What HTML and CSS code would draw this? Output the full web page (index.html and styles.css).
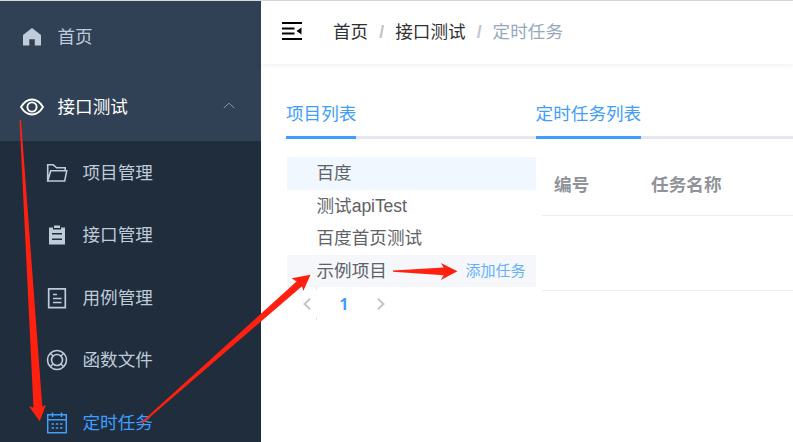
FILE: index.html
```html
<!DOCTYPE html>
<html lang="zh-CN">
<head>
<meta charset="utf-8">
<title>定时任务</title>
<link rel="stylesheet" href="styles.css">
</head>
<body>
<div class="app">
  <aside class="sidebar">
    <div class="item top-item">
      <svg class="icon" viewBox="0 0 24 24"><path fill="currentColor" d="M12 3 21 10v10.500h-6.200v-6.300H9.300v6.300H3V10z"/></svg>
      <span>首页</span>
    </div>
    <div class="item top-item open">
      <svg class="icon" viewBox="0 0 24 24"><g fill="none" stroke="currentColor" stroke-width="1.900"><path d="M1 12Q5.500 4.500 12 4.500T23 12Q18.500 19.500 12 19.500T1 12Z"/><circle cx="12" cy="12" r="4.600"/></g></svg>
      <span>接口测试</span>
      <svg class="chevron" viewBox="0 0 12 7"><path d="M.8 6 6 1.200 11.200 6"/></svg>
    </div>
    <nav class="submenu">
      <div class="item">
        <svg class="icon" viewBox="0 0 24 24"><path fill="none" stroke="currentColor" stroke-width="1.600" d="M2.700 20V3.800H8.200L11.700 6.800H20.200V9.500M2.700 20 5.700 9.800H21.700L19.700 20Z"/></svg>
        <span>项目管理</span>
      </div>
      <div class="item">
        <svg class="icon" viewBox="0 0 24 24"><path fill="currentColor" fill-rule="evenodd" d="M4 4.500H8V6.500H16V4.500H20V21.500H4ZM7 10V11.500H17V10ZM7 15.500V17H17V15.500ZM9 2.500H15V5H9Z"/></svg>
        <span>接口管理</span>
      </div>
      <div class="item">
        <svg class="icon" viewBox="0 0 24 24"><path fill="none" stroke="currentColor" stroke-width="1.700" d="M3.700 2.800H20.300V21.700H3.700ZM8 8.500H12M8 12.500H16.500M8 16.500H16.500"/></svg>
        <span>用例管理</span>
      </div>
      <div class="item">
        <svg class="icon" viewBox="0 0 24 24"><g fill="none" stroke="currentColor" stroke-width="1.600"><circle cx="12" cy="12" r="9.500"/><circle cx="12" cy="12" r="5.500"/><path d="M5.300 5.300 8 8M18.700 5.300 16 8M5.300 18.700 8 16M18.700 18.700 16 16"/></g></svg>
        <span>函数文件</span>
      </div>
      <div class="item current">
        <svg class="icon" viewBox="0 0 24 24"><path fill="none" stroke="currentColor" stroke-width="1.500" d="M2.700 3.700H21.300V21.700H2.700ZM2.700 8.700H21.300M7.500 1.500V6M16.500 1.500V6M6.500 13H9M10.800 13H13.300M15 13H17.500M6.500 17H9M10.800 17H13.300M15 17H17.500"/></svg>
        <span>定时任务</span>
      </div>
    </nav>
  </aside>
  <main class="main">
    <header class="header">
      <svg class="toggle" viewBox="0 0 20 18"><path stroke="currentColor" stroke-width="2" d="M0 1H20M0 6.500H12.500M0 11.500H12.500M0 17H20"/><path fill="currentColor" d="M19.500 5.500V12.500L14.500 9Z"/></svg>
      <div class="crumbs"><span>首页</span><i>/</i><span>接口测试</span><i>/</i><span class="last">定时任务</span></div>
    </header>
    <div class="content">
      <section class="projects">
        <div class="tabs"><span class="tab">项目列表</span></div>
        <div class="list">
          <div class="row selected">百度</div>
          <div class="row">测试<span class="latin">apiTest</span></div>
          <div class="row">百度首页测试</div>
          <div class="row hover"><span>示例项目</span><a class="add">添加任务</a></div>
        </div>
        <div class="pager">
          <svg viewBox="0 0 8 12"><path d="M7 .8 1.500 6 7 11.200"/></svg>
          <b>1</b>
          <svg viewBox="0 0 8 12"><path d="M1 .8 6.500 6 1 11.200"/></svg>
        </div>
      </section>
      <section class="tasks">
        <div class="tabs"><span class="tab">定时任务列表</span></div>
        <div class="table">
          <div class="thead"><span>编号</span><span>任务名称</span></div>
          <div class="tbody"></div>
        </div>
      </section>
    </div>
  </main>
</div>
<svg class="arrows" viewBox="0 0 793 442">
  <path d="M19.500 120H21L42.300 406.700 46 404.700 39.700 421.300 28.800 406 33.500 407.700Z"/>
  <path d="M141 422.500 296.500 281.500 291.700 278.300 310.500 274.700 303.300 291 302 286.300 142.500 423.500Z"/>
  <path d="M393 270.400 443.700 267.500 440.800 263 457.500 271.300 440.800 280 443.700 275.200 393 271.700Z"/>
</svg>
</body>
</html>
```
FILE: styles.css
```css
* { box-sizing: border-box; }
body {
  margin: 0;
  overflow: hidden;
  background: #fff;
  font: 400 17.6px/24px "Liberation Sans", "Noto Sans CJK SC", sans-serif;
}
.app {
  display: flex;
  height: 442px;
  border-top: 1px solid #d7d9db;
}
.sidebar {
  width: 261px;
  flex: none;
  overflow: hidden;
  background: #304156;
  color: #bfcbd9;
}
.item {
  display: flex;
  align-items: center;
  height: 62.5px;
  padding: 1px 0 0 45px;
}
.top-item { height: 70px; padding: 2px 26px 0 20px; }
.icon { width: 24px; height: 24px; margin-right: 13.5px; flex: none; }
.open { color: #fff; }
.chevron {
  width: 12px;
  height: 7px;
  margin: -4px 0 0 auto;
  fill: none;
  stroke: #8a939f;
}
.submenu { height: 320px; background: #1f2d3d; }
.current { color: #409eff; }
.main { flex: 1; min-width: 0; }
.header {
  display: flex;
  align-items: center;
  height: 63px;
  padding: 0 0 2px 21px;
  box-shadow: 0 1px 5px rgba(0, 21, 41, .08);
}
.toggle { width: 20px; height: 18px; margin: -1px 31px 0 0; color: #000; }
.crumbs { display: flex; align-items: center; color: #303133; }
.crumbs i {
  width: 27px;
  text-align: center;
  font-style: normal;
  font-weight: 700;
  color: #c0c4cc;
}
.crumbs .last { color: #97a8be; }
.content {
  display: flex;
  padding: 36px 0 0 25px;
}
.projects { width: 249.6px; flex: none; }
.tasks { flex: 1; }
.tabs {
  display: flex;
  height: 39px;
  border-bottom: 3px solid #e4e7ed;
}
.tab {
  height: 39px;
  padding-top: 2px;
  border-bottom: 3px solid #409eff;
  color: #409eff;
}
.list { margin: 18px 0 0 1px; }
.row {
  display: flex;
  align-items: center;
  height: 32.6px;
  padding: 0 10px 0 29.5px;
  color: #606266;
}
.latin { letter-spacing: -.1px; }
.selected { background: #f0f7ff; }
.hover { background: #f5f7fa; }
.add { margin-left: auto; font-size: 15px; color: #66b1ff; }
.pager {
  display: flex;
  align-items: center;
  justify-content: space-between;
  width: 82px;
  height: 33px;
  padding-top: 1px;
  margin-left: 17px;
  color: #409eff;
  font-size: 16px;
  background:
    linear-gradient(#e4e7ed, #e4e7ed) 13px 0 / 1px 3px no-repeat,
    linear-gradient(#e4e7ed, #e4e7ed) 13px 30px / 1px 3px no-repeat;
}
.pager b { font: 700 15.5px/24px "Open Sans", sans-serif; }
.pager svg {
  width: 8px;
  height: 12px;
  fill: none;
  stroke: #c0c4cc;
  stroke-width: 1.9;
}
.table { margin: 17px 0 0 6px; }
.thead {
  display: grid;
  grid-template-columns: 97px 1fr;
  align-items: center;
  height: 60px;
  padding: 0 0 2px 12.500px;
  border-bottom: 1px solid #ebeef5;
  font-weight: 700;
  color: #909399;
}
.tbody { height: 75px; border-bottom: 1px solid #ebeef5; }
.arrows {
  position: absolute;
  inset: 0;
  width: 793px;
  height: 442px;
  fill: #ff2010;
}
```
